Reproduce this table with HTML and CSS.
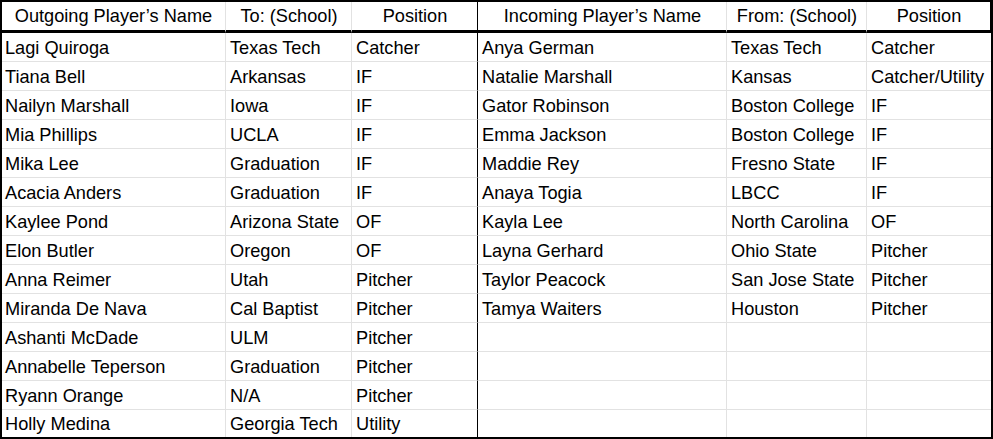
FILE: index.html
```html
<!DOCTYPE html>
<html>
<head>
<meta charset="utf-8">
<link rel="stylesheet" href="styles.css">
</head>
<body>
<div class="sheet">
  <div class="c h">Outgoing Player’s Name</div><div class="c h">To: (School)</div><div class="c h split">Position</div><div class="c h">Incoming Player’s Name</div><div class="c h">From: (School)</div><div class="c h end">Position</div>

  <div class="c">Lagi Quiroga</div><div class="c">Texas Tech</div><div class="c split">Catcher</div><div class="c">Anya German</div><div class="c">Texas Tech</div><div class="c end">Catcher</div>
  <div class="c">Tiana Bell</div><div class="c">Arkansas</div><div class="c split">IF</div><div class="c">Natalie Marshall</div><div class="c">Kansas</div><div class="c end">Catcher/Utility</div>
  <div class="c">Nailyn Marshall</div><div class="c">Iowa</div><div class="c split">IF</div><div class="c">Gator Robinson</div><div class="c">Boston College</div><div class="c end">IF</div>
  <div class="c">Mia Phillips</div><div class="c">UCLA</div><div class="c split">IF</div><div class="c">Emma Jackson</div><div class="c">Boston College</div><div class="c end">IF</div>
  <div class="c">Mika Lee</div><div class="c">Graduation</div><div class="c split">IF</div><div class="c">Maddie Rey</div><div class="c">Fresno State</div><div class="c end">IF</div>
  <div class="c">Acacia Anders</div><div class="c">Graduation</div><div class="c split">IF</div><div class="c">Anaya Togia</div><div class="c">LBCC</div><div class="c end">IF</div>
  <div class="c">Kaylee Pond</div><div class="c">Arizona State</div><div class="c split">OF</div><div class="c">Kayla Lee</div><div class="c">North Carolina</div><div class="c end">OF</div>
  <div class="c">Elon Butler</div><div class="c">Oregon</div><div class="c split">OF</div><div class="c">Layna Gerhard</div><div class="c">Ohio State</div><div class="c end">Pitcher</div>
  <div class="c">Anna Reimer</div><div class="c">Utah</div><div class="c split">Pitcher</div><div class="c">Taylor Peacock</div><div class="c">San Jose State</div><div class="c end">Pitcher</div>
  <div class="c">Miranda De Nava</div><div class="c">Cal Baptist</div><div class="c split">Pitcher</div><div class="c">Tamya Waiters</div><div class="c">Houston</div><div class="c end">Pitcher</div>
  <div class="c">Ashanti McDade</div><div class="c">ULM</div><div class="c split">Pitcher</div><div class="c"></div><div class="c"></div><div class="c end"></div>
  <div class="c">Annabelle Teperson</div><div class="c">Graduation</div><div class="c split">Pitcher</div><div class="c"></div><div class="c"></div><div class="c end"></div>
  <div class="c">Ryann Orange</div><div class="c">N/A</div><div class="c split">Pitcher</div><div class="c"></div><div class="c"></div><div class="c end"></div>
  <div class="c last">Holly Medina</div><div class="c last">Georgia Tech</div><div class="c last split">Utility</div><div class="c last"></div><div class="c last"></div><div class="c last end"></div>
</div>
</body>
</html>
```

FILE: styles.css
```css
html, body {
  margin: 0;
  padding: 0;
  background: #ffffff;
}

.sheet {
  width: 993px;
  box-sizing: border-box;
  border: 2px solid #000000;
  display: grid;
  grid-template-columns: 224px 126px 126px 249px 140px 124px;
  font-family: "Liberation Sans", Arial, sans-serif;
  font-size: 18.2px;
  color: #000000;
}

.c {
  box-sizing: border-box;
  height: 29px;
  padding: 2px 3px 0 4px;
  border-right: 1px solid #e2e2e2;
  border-bottom: 1px solid #e2e2e2;
  display: flex;
  align-items: center;
  white-space: nowrap;
  overflow: hidden;
}

.c:nth-child(6n+1) {
  padding-left: 3px;
}

.c.split {
  border-right-color: #000000;
}

.c.end {
  border-right: none;
}

.c.h {
  height: 31px;
  padding-top: 1px;
  border-bottom: 3px solid #000000;
  justify-content: center;
}

.c.h.end {
  border-right: 1px solid #000000;
}

.c.last {
  height: 27px;
  border-bottom: none;
}
```
